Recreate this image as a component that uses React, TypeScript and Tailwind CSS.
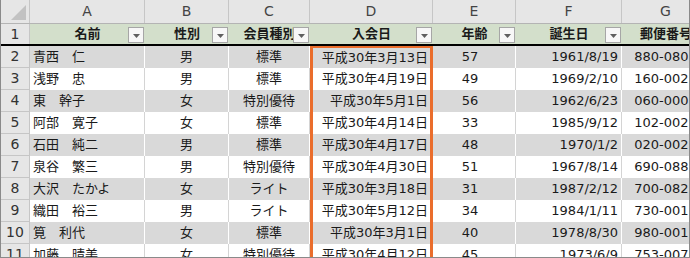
import React from 'react';

type Row = [string, string, string, string, string, string, string];

const COLS = [
  { letter: 'A', w: 'w-[115px]', title: '名前', align: 'justify-start pl-[3px]' },
  { letter: 'B', w: 'w-[84px]', title: '性別', align: 'justify-center' },
  { letter: 'C', w: 'w-[81px]', title: '会員種別', align: 'justify-center' },
  { letter: 'D', w: 'w-[123px]', title: '入会日', align: 'justify-end pr-[2px]' },
  { letter: 'E', w: 'w-[83px]', title: '年齢', align: 'justify-center pr-[8px]' },
  { letter: 'F', w: 'w-[106px]', title: '誕生日', align: 'justify-end pr-[3px]' },
  { letter: 'G', w: 'w-[88px]', title: '郵便番号', align: 'justify-center' },
];

const ROWS: Row[] = [
  ['青西　仁', '男', '標準', '平成30年3月13日', '57', '1961/8/19', '880-0801'],
  ['浅野　忠', '男', '標準', '平成30年4月19日', '49', '1969/2/10', '160-0022'],
  ['東　幹子', '女', '特別優待', '平成30年5月1日', '56', '1962/6/23', '060-0001'],
  ['阿部　寛子', '女', '標準', '平成30年4月14日', '33', '1985/9/12', '102-0021'],
  ['石田　純二', '男', '標準', '平成30年4月17日', '48', '1970/1/2', '020-0021'],
  ['泉谷　繁三', '男', '特別優待', '平成30年4月30日', '51', '1967/8/14', '690-0887'],
  ['大沢　たかよ', '女', 'ライト', '平成30年3月18日', '31', '1987/2/12', '700-0822'],
  ['織田　裕三', '男', 'ライト', '平成30年5月12日', '34', '1984/1/11', '730-0011'],
  ['筧　利代', '女', '標準', '平成30年3月1日', '40', '1978/8/30', '980-0011'],
  ['加藤　晴美', '女', '特別優待', '平成30年4月12日', '45', '1973/6/9', '753-0070'],
];

const font = { fontFamily: '"DejaVu Sans", "Noto Sans CJK JP", sans-serif' };

const FilterButton: React.FC = () => (
  <span className="absolute right-[1px] top-[3px] w-[16px] h-[16px] bg-[#f7f7f7] border border-[#a6a6a6] flex items-center justify-center">
    <svg width="7" height="4" viewBox="0 0 7 4" className="mt-[2px]">
      <polygon points="0,0 7,0 3.5,4" fill="#5f5f5f" />
    </svg>
  </span>
);

const App: React.FC = () => {
  return (
    <div
      className="w-[690px] h-[258px] overflow-hidden bg-white border-l border-r border-b border-[#8a8a8a] text-[13px] text-[#1a1a1a]"
      style={font}
    >
      {/* Column letters */}
      <div className="flex h-[24px] bg-[#e6e6e6] border-b border-[#b4b4b4]">
        <div className="w-[29px] shrink-0 border-r border-[#c6c6c6] flex items-end justify-end pr-[3px] pb-[3px]">
          <svg width="15" height="15" viewBox="0 0 15 15">
            <polygon points="15,0 15,15 0,15" fill="#c2c2c2" />
          </svg>
        </div>
        {COLS.map((c) => (
          <div
            key={c.letter}
            className={`${c.w} shrink-0 border-r border-[#c6c6c6] flex items-center justify-center text-[14px] text-[#444]`}
          >
            {c.letter}
          </div>
        ))}
      </div>

      {/* Table header row */}
      <div className="flex h-[22px] border-b-2 border-black">
        <div className="w-[29px] shrink-0 bg-[#e6e6e6] border-r border-[#c6c6c6] flex items-center justify-center text-[14px] text-[#333]">
          1
        </div>
        {COLS.map((c) => (
          <div
            key={c.letter}
            className={`${c.w} shrink-0 relative bg-[#d3dfcb] flex items-center justify-center font-bold text-[13px] whitespace-nowrap overflow-hidden`}
          >
            {c.title}
            {c.letter !== 'G' && <FilterButton />}
          </div>
        ))}
      </div>

      {/* Data rows */}
      {ROWS.map((r, i) => {
        const shaded = i % 2 === 0;
        return (
          <div key={i} className={`flex h-[22px] ${shaded ? 'bg-[#d9d9d9]' : 'bg-white'}`}>
            <div className="w-[29px] shrink-0 bg-[#e6e6e6] border-r border-b border-[#c6c6c6] flex items-center justify-center text-[14px] text-[#333]">
              {i + 2}
            </div>
            {r.map((v, j) => {
              const isD = j === 3;
              return (
                <div
                  key={j}
                  className={`${COLS[j].w} shrink-0 flex items-center whitespace-nowrap overflow-hidden ${COLS[j].align} ${
                    isD
                      ? `border-x-[3px] border-[#ea6d2c] ${i === 0 ? 'border-t-[2px]' : ''}`
                      : `border-r ${shaded ? 'border-white' : 'border-[#d4d4d4]'}`
                  }`}
                >
                  {v}
                </div>
              );
            })}
          </div>
        );
      })}
    </div>
  );
};

export default App;
